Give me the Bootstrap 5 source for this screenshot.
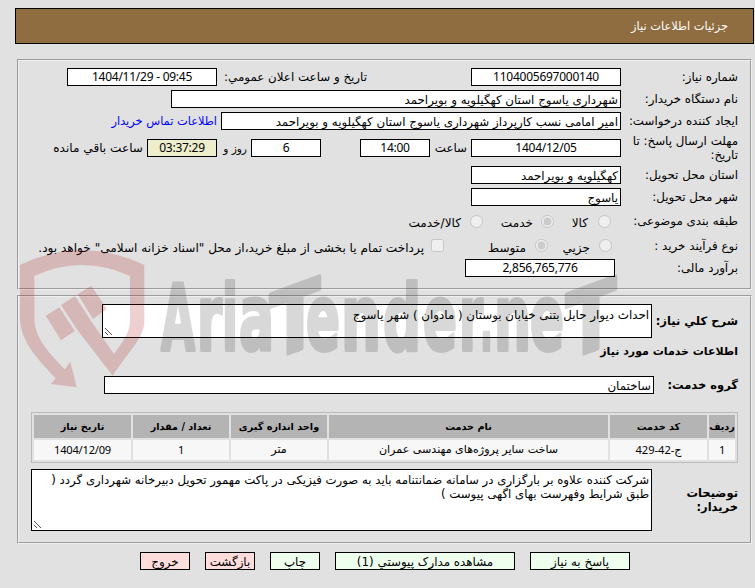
<!DOCTYPE html>
<html lang="fa" dir="rtl">
<head>
  <meta charset="UTF-8">
  <meta name="viewport" content="width=device-width, initial-scale=1">
  <title>جزئیات اطلاعات نیاز</title>

  <!-- Bootstrap 5 -->
  <link href="https://cdn.jsdelivr.net/npm/bootstrap@5.3.2/dist/css/bootstrap.min.css" rel="stylesheet">

  <style>
    body {
      background-color: #e1e1e1;
      font-family: "DejaVu Sans", sans-serif;
      font-size: 11.85px;
      line-height: 14px;
      color: #000;
      overflow: hidden;
    }
    span, label { white-space: nowrap; }

    /* title bar */
    .title-bar {
      margin: 8px 1px 15px 15px;
      height: 36px;
      background: #8f6d40;
      border: 1px solid #000;
      color: #fff;
      font-size: 11.4px;
      padding-right: 25px;
    }

    /* grooved boxes */
    .group-box {
      margin: 0 3px 5px 17px;
      border: 2px groove #f0f0f0;
      padding: 5px 12px 0 12px;
    }
    .line { display: flex; align-items: center; height: 22px; }
    .line > * { flex: none; }
    .cap { width: 117px; }
    .cap-bold { font-weight: bold; font-size: 11.5px; }

    /* read-only value boxes */
    .box {
      height: 18px;
      background: #fff;
      border: 1px solid #000;
      line-height: 18px;
      padding: 0 2px;
      white-space: nowrap;
      overflow: hidden;
    }
    .num {
      text-align: center;
      font-family: "Noto Sans", sans-serif;
      font-size: 12px;
      letter-spacing: -.25px;
      line-height: 16px;
    }
    .w70 { width: 70px; }
    .w150 { width: 150px; }
    .w400 { width: 400px; }
    .w450 { width: 450px; }
    .w550 { width: 550px; }
    .timer { background: #eec; }

    .pick { margin: 0; width: 13px; height: 13px; appearance: auto; }
    .txt { padding-top: 4px; font-size: 12.1px; }
    .area {
      position: relative;
      background: #fff;
      border: 1px solid #000;
      padding: 3px 2px;
      white-space: nowrap;
    }
    .grip { position: absolute; left: 1px; bottom: 1px; }

    /* services table */
    .items {
      width: 707px;
      table-layout: fixed;
      border: 1px solid #bbb;
      border-collapse: separate;
      border-spacing: 2px;
      text-align: center;
      font-size: 11.1px;
      margin: 16px 0 6px;
    }
    .items th { background: #b4b4b4; height: 23px; padding: 0; font-size: 9.7px; white-space: nowrap; }
    .items td { background: #f7f7f7; height: 20px; padding: 0; white-space: nowrap; }
    .items .n { font-family: "Noto Sans", "DejaVu Sans", sans-serif; letter-spacing: -.2px; }

    .act {
      height: 18px;
      border: 1px solid #000;
      border-radius: 0;
      padding: 0;
      font-size: 11.9px;
      line-height: 18px;
      color: #000;
      background: #efe;
      white-space: nowrap;
    }
    .act-red { background: #fdd; }

    .watermark { position: absolute; left: 0; top: 0; pointer-events: none; }
  </style>
</head>
<body>

<div class="title-bar d-flex align-items-center"><span>جزئیات اطلاعات نیاز</span></div>

<!-- need details -->
<section class="group-box" style="height: 231px">
  <div class="line">
    <span class="cap">شماره نیاز:</span>
    <div class="box num w150">1104005697000140</div>
    <span style="width: 150px; margin-right: 104px">تاریخ و ساعت اعلان عمومي:</span>
    <div class="box num w150" dir="ltr">1404/11/29 - 09:45</div>
  </div>
  <div class="line">
    <span class="cap">نام دستگاه خریدار:</span>
    <div class="box w450">شهرداری یاسوج استان کهگیلویه و بویراحمد</div>
  </div>
  <div class="line">
    <span class="cap">ایجاد کننده درخواست:</span>
    <div class="box w400">امیر امامی نسب کارپرداز شهرداری یاسوج استان کهگیلویه و بویراحمد</div>
    <span style="color: #00f; padding-right: 4px; font-size: 11.4px">اطلاعات تماس خریدار</span>
  </div>
  <div class="line" style="height: 32px">
    <span class="cap">مهلت ارسال پاسخ: تا<br>تاریخ:</span>
    <div class="box num w150">1404/12/05</div>
    <span style="width: 41px; padding-right: 4px">ساعت</span>
    <div class="box num w70">14:00</div>
    <div style="width: 39px"></div>
    <div class="box num w70">6</div>
    <span style="width: 34px; padding-right: 4px; font-size: 10.6px">روز و</span>
    <div class="box num w70 timer">03:37:29</div>
    <span style="padding-right: 4px; font-size: 12.1px">ساعت باقي مانده</span>
  </div>
  <div class="line">
    <span class="cap">استان محل تحویل:</span>
    <div class="box w150">کهگیلویه و بویراحمد</div>
  </div>
  <div class="line">
    <span class="cap">شهر محل تحویل:</span>
    <div class="box w150">یاسوج</div>
  </div>
  <div class="line" style="height: 26px">
    <span class="cap" style="width: 127px">طبقه بندی موضوعی:</span>
    <input class="pick" type="radio" name="kind" disabled>
    <label class="txt" style="width: 44px; padding-right: 10px">کالا</label>
    <input class="pick" type="radio" name="kind" checked disabled>
    <label class="txt" style="width: 58px; padding-right: 8px">خدمت</label>
    <input class="pick" type="radio" name="kind" disabled>
    <label class="txt" style="padding-right: 9px">کالا/خدمت</label>
  </div>
  <div class="line" style="height: 23px">
    <span class="cap" style="width: 126px">نوع فرآیند خرید :</span>
    <input class="pick" type="radio" name="process" disabled>
    <label class="txt" style="width: 51px; padding-right: 9px">جزیي</label>
    <input class="pick" type="radio" name="process" checked disabled>
    <label class="txt" style="width: 91px; padding-right: 9px">متوسط</label>
    <input class="pick" type="checkbox" disabled>
    <label class="txt" style="padding-right: 7px">پرداخت تمام یا بخشی از مبلغ خرید،از محل "اسناد خزانه اسلامی" خواهد بود.</label>
  </div>
  <div class="line">
    <span class="cap" style="width: 123px">برآورد مالی:</span>
    <div class="box num w150">2,856,765,776</div>
  </div>
</section>

<!-- requested services -->
<section class="group-box" style="height: 249px; padding-top: 7px">
  <div class="d-flex align-items-center">
    <span class="cap-bold" style="width: 86px">شرح کلي نیاز:</span>
    <div class="area w550" style="height: 34px">احداث دیوار حایل بتنی خیابان بوستان ( مادوان ) شهر یاسوج
      <svg class="grip" width="9" height="9"><path d="M1 1l7 7M1 5l3 3" stroke="#555" stroke-width="1"/></svg>
    </div>
  </div>
  <div class="line" style="height: 28px"><span class="cap-bold" style="font-size: 11px">اطلاعات خدمات مورد نیاز</span></div>
  <div class="line" style="margin-top: 8px">
    <span class="cap-bold" style="width: 84px">گروه خدمت:</span>
    <div class="box w550">ساختمان</div>
  </div>

  <table class="items">
    <colgroup>
      <col style="width: 26px"><col style="width: 97px"><col style="width: 279px"><col style="width: 96px"><col style="width: 96px"><col>
    </colgroup>
    <tr>
      <th>ردیف</th>
      <th>کد خدمت</th>
      <th>نام خدمت</th>
      <th>واحد اندازه گیری</th>
      <th>تعداد / مقدار</th>
      <th>تاریخ نیاز</th>
    </tr>
    <tr>
      <td class="n">1</td>
      <td class="n">ج-42-429</td>
      <td>ساخت سایر پروژه‌های مهندسی عمران</td>
      <td>متر</td>
      <td class="n">1</td>
      <td class="n">1404/12/09</td>
    </tr>
  </table>

  <div class="d-flex align-items-center">
    <span class="cap-bold" style="width: 86px">توضیحات<br>خریدار:</span>
    <div class="area" style="width: 621px; height: 62px; font-size: 11.75px">شرکت کننده علاوه بر بارگزاری در سامانه ضمانتنامه باید به صورت فیزیکی در پاکت مهمور تحویل دبیرخانه شهرداری گردد (<br>طبق شرایط وفهرست بهای اگهی پیوست )
      <svg class="grip" width="9" height="9"><path d="M1 1l7 7M1 5l3 3" stroke="#555" stroke-width="1"/></svg>
    </div>
  </div>
</section>

<!-- page actions -->
<div class="d-flex justify-content-center" style="gap: 15px; margin: 8px 0 0 15px">
  <button class="btn act" style="width: 100px">پاسخ به نیاز</button>
  <button class="btn act" style="width: 180px">مشاهده مدارک پیوستي (1)</button>
  <button class="btn act" style="width: 50px">چاپ</button>
  <button class="btn act act-red" style="width: 50px">بازگشت</button>
  <button class="btn act act-red" style="width: 50px">خروج</button>
</div>

<!-- site watermark over the form -->
<svg class="watermark" width="755" height="588" viewBox="0 0 755 588" direction="ltr">
  <g opacity=".18" fill="#a00" transform="translate(15 245) scale(.3333)">
    <path d="M15 60Q200 -30 388 60V230C388 275 345 315 293 392L185 252L138 180L180 153L228 228L297 327C325 288 345 262 345 228V93Q200 27 58 93V225C62 285 105 325 149 373L166 350L185 427L107 417L122 400C75 350 15 290 15 220Z"/>
    <path d="M92 212L133 187L179 258L138 286ZM188 148L229 122L275 192L234 222Z"/>
  </g>
  <g opacity=".15" fill="#000" stroke="#000" stroke-width="4" stroke-linejoin="round" font-family="DejaVu Sans" font-weight="bold" font-size="90">
    <text x="161" y="350" textLength="34" lengthAdjust="spacingAndGlyphs">A</text>
    <text x="197" y="350" textLength="25" lengthAdjust="spacingAndGlyphs">r</text>
    <text x="222" y="350" textLength="16" lengthAdjust="spacingAndGlyphs">i</text>
    <text x="239" y="350" textLength="35" lengthAdjust="spacingAndGlyphs">a</text>
    <text transform="translate(270 360) skewY(-20)" textLength="50" lengthAdjust="spacingAndGlyphs">T</text>
    <text x="306" y="350" textLength="34" lengthAdjust="spacingAndGlyphs">e</text>
    <text x="341" y="350" textLength="40" lengthAdjust="spacingAndGlyphs">n</text>
    <text x="383" y="350" textLength="38" lengthAdjust="spacingAndGlyphs">d</text>
    <text x="423" y="350" textLength="34" lengthAdjust="spacingAndGlyphs">e</text>
    <text x="459" y="350" textLength="24" lengthAdjust="spacingAndGlyphs">r</text>
    <text x="480" y="350" textLength="13" lengthAdjust="spacingAndGlyphs">.</text>
    <text x="494" y="350" textLength="37" lengthAdjust="spacingAndGlyphs">n</text>
    <text x="530" y="350" textLength="34" lengthAdjust="spacingAndGlyphs">e</text>
    <text transform="translate(566 360) skewY(-20)" textLength="50" lengthAdjust="spacingAndGlyphs">T</text>
  </g>
</svg>

<!-- Bootstrap Bundle -->
<script src="https://cdn.jsdelivr.net/npm/bootstrap@5.3.2/dist/js/bootstrap.bundle.min.js"></script>
</body>
</html>
